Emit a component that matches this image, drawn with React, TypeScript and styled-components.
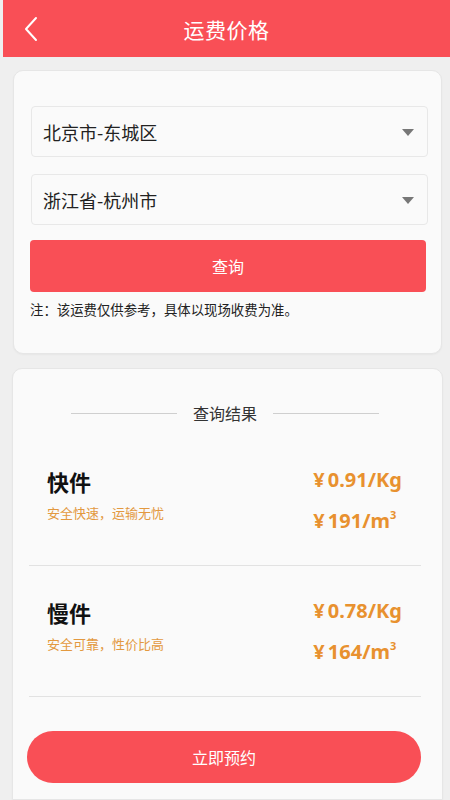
import React from "react";
import styled, { createGlobalStyle } from "styled-components";

const Global = createGlobalStyle`
  html, body { margin: 0; padding: 0; background: #efefef; }
  body { font-family: "Noto Sans CJK SC", "Noto Sans", sans-serif; }
  * { box-sizing: border-box; }
`;

const Page = styled.div`
  width: 450px;
  height: 800px;
  overflow: hidden;
  padding-left: 3px;
  background: #efefef;
  display: flex;
  flex-direction: column;
`;

const Header = styled.header`
  height: 57px;
  flex-shrink: 0;
  background: #f94f56;
  position: relative;
  display: flex;
  align-items: center;
  justify-content: center;
`;

const Back = styled.div`
  position: absolute;
  left: 18px;
  top: 16px;
  width: 20px;
  height: 26px;
  display: flex;
`;

const Title = styled.h1`
  margin: 0;
  color: #fff;
  font-size: 21px;
  font-weight: 400;
  letter-spacing: 0.5px;
  padding-top: 1px;
`;

const Card = styled.section<{ $top: number }>`
  margin: ${(p) => p.$top}px 8px 0 10px;
  background: #fafafa;
  border: 1px solid #e6e6e6;
  border-radius: 10px;
  box-shadow: 0 1px 2px rgba(0, 0, 0, 0.04);
`;

const QueryCard = styled(Card)`
  padding: 35px 13px 34px 16px;
  display: flex;
  flex-direction: column;
`;

const Select = styled.div<{ $mt: number }>`
  height: 51px;
  margin-top: ${(p) => p.$mt}px;
  margin-left: 1px;
  border: 1px solid #e8e8e8;
  border-radius: 4px;
  background: #fafafa;
  display: flex;
  align-items: center;
  justify-content: space-between;
  padding: 0 13px 0 11px;
  font-size: 18px;
  color: #222;
`;

const Caret = styled.span`
  width: 0;
  height: 0;
  border-left: 6px solid transparent;
  border-right: 6px solid transparent;
  border-top: 7px solid #777;
  margin-top: 2px;
`;

const QueryButton = styled.button`
  margin-top: 15px;
  margin-right: 2px;
  height: 52px;
  border: none;
  border-radius: 4px;
  background: #f94f56;
  color: #fff;
  font-family: inherit;
  font-size: 16px;
  padding: 0;
`;

const Note = styled.p`
  margin: 8px 0 0;
  font-size: 13.4px;
  color: #222;
  line-height: 19px;
`;

const ResultCard = styled(Card)`
  flex: 1;
  border-bottom-left-radius: 0;
  border-bottom-right-radius: 0;
  margin-left: 9px;
  margin-right: 7px;
  padding: 32px 21px 0 16px;
  display: flex;
  flex-direction: column;
`;

const SectionTitle = styled.div`
  display: flex;
  align-items: center;
  justify-content: center;
  gap: 16px;
  font-size: 16px;
  color: #333;
  line-height: 24px;
`;

const Line = styled.span`
  width: 106px;
  height: 1px;
  background: #cfcfcf;
`;

const Item = styled.div<{ $pt: number }>`
  display: flex;
  justify-content: space-between;
  padding: ${(p) => p.$pt}px 19px 0 18px;
  height: ${(p) => p.$pt + 100}px;
  border-bottom: 1px solid #e2e2e2;
`;

const ItemLeft = styled.div`
  display: flex;
  flex-direction: column;
`;

const ItemName = styled.div`
  font-size: 22px;
  font-weight: 700;
  color: #111;
  line-height: 30px;
`;

const ItemDesc = styled.div`
  margin-top: 8px;
  font-size: 13px;
  color: #e3993f;
  line-height: 18px;
`;

const Prices = styled.div`
  display: flex;
  flex-direction: column;
  align-items: flex-start;
  gap: 13px;
`;

const Price = styled.div`
  font-family: "Noto Sans", "Noto Sans CJK SC", sans-serif;
  font-size: 20px;
  font-weight: 700;
  color: #e8912f;
  line-height: 28px;
  sup {
    font-size: 11px;
    vertical-align: 9px;
    line-height: 0;
  }
`;

const Yen = styled.span`
  margin-right: 3px;
`;

const BookButton = styled.button`
  margin-top: 34px;
  margin-left: -2px;
  margin-right: 0;
  height: 52px;
  border: none;
  border-radius: 26px;
  background: #f94f56;
  color: #fff;
  font-family: "Noto Sans CJK SC", sans-serif;
  font-size: 16px;
  padding: 0;
`;

const items = [
  { name: "快件", desc: "安全快速，运输无忧", kg: "0.91", m3: "191", pt: 41 },
  { name: "慢件", desc: "安全可靠，性价比高", kg: "0.78", m3: "164", pt: 31 },
];

export default function App() {
  return (
    <>
      <Global />
      <Page>
        <Header>
          <Back>
            <svg width="20" height="26" viewBox="0 0 20 26">
              <path d="M15 2 L5 13 L15 24" fill="none" stroke="#fff" strokeWidth="2" strokeLinecap="round" strokeLinejoin="round" />
            </svg>
          </Back>
          <Title>运费价格</Title>
        </Header>
        <QueryCard $top={13}>
          <Select $mt={0}>
            <span>北京市-东城区</span>
            <Caret />
          </Select>
          <Select $mt={17}>
            <span>浙江省-杭州市</span>
            <Caret />
          </Select>
          <QueryButton>查询</QueryButton>
          <Note>注：该运费仅供参考，具体以现场收费为准。</Note>
        </QueryCard>
        <ResultCard $top={14}>
          <SectionTitle>
            <Line />
            <span>查询结果</span>
            <Line />
          </SectionTitle>
          {items.map((it) => (
            <Item key={it.name} $pt={it.pt}>
              <ItemLeft>
                <ItemName>{it.name}</ItemName>
                <ItemDesc>{it.desc}</ItemDesc>
              </ItemLeft>
              <Prices>
                <Price>
                  <Yen>¥</Yen>
                  {it.kg}/Kg
                </Price>
                <Price>
                  <Yen>¥</Yen>
                  {it.m3}/m<sup>3</sup>
                </Price>
              </Prices>
            </Item>
          ))}
          <BookButton>立即预约</BookButton>
        </ResultCard>
      </Page>
    </>
  );
}
